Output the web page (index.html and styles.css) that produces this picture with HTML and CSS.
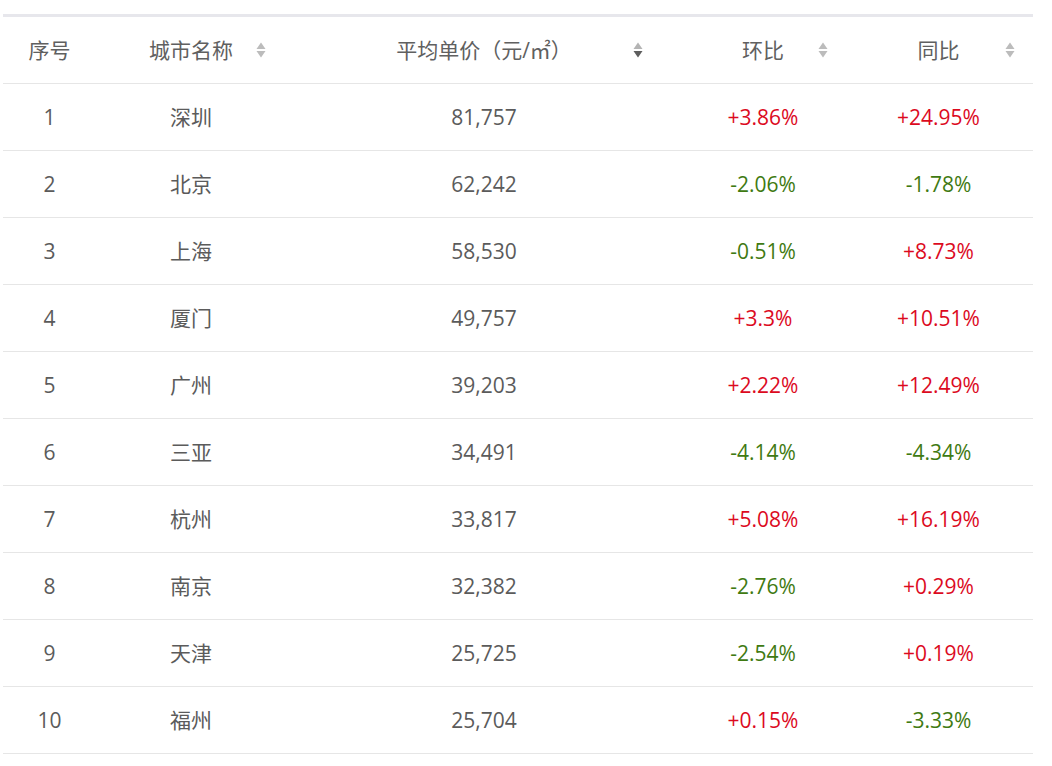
FILE: index.html
```html
<!DOCTYPE html>
<html lang="zh-CN">
<head>
<meta charset="utf-8">
<title>城市房价排行</title>
<link rel="stylesheet" href="styles.css">
</head>
<body>
<div class="table">
  <div class="row head">
    <div class="cell">序号</div>
    <div class="cell sortable">城市名称<svg class="sort" viewBox="0 0 10 16" width="10" height="16"><polygon class="up" points="0.5,7 5,0.5 9.5,7"/><polygon class="down" points="0.5,9 9.5,9 5,15.5"/></svg></div>
    <div class="cell sortable wide">平均单价（元/㎡）<svg class="sort active-desc" viewBox="0 0 10 16" width="10" height="16"><polygon class="up" points="0.5,7 5,0.5 9.5,7"/><polygon class="down" points="0.5,9 9.5,9 5,15.5"/></svg></div>
    <div class="cell sortable">环比<svg class="sort" viewBox="0 0 10 16" width="10" height="16"><polygon class="up" points="0.5,7 5,0.5 9.5,7"/><polygon class="down" points="0.5,9 9.5,9 5,15.5"/></svg></div>
    <div class="cell sortable">同比<svg class="sort" viewBox="0 0 10 16" width="10" height="16"><polygon class="up" points="0.5,7 5,0.5 9.5,7"/><polygon class="down" points="0.5,9 9.5,9 5,15.5"/></svg></div>
  </div>
  <div class="row"><div class="cell">1</div><div class="cell">深圳</div><div class="cell">81,757</div><div class="cell up-c">+3.86%</div><div class="cell up-c">+24.95%</div></div>
  <div class="row"><div class="cell">2</div><div class="cell">北京</div><div class="cell">62,242</div><div class="cell down-c">-2.06%</div><div class="cell down-c">-1.78%</div></div>
  <div class="row"><div class="cell">3</div><div class="cell">上海</div><div class="cell">58,530</div><div class="cell down-c">-0.51%</div><div class="cell up-c">+8.73%</div></div>
  <div class="row"><div class="cell">4</div><div class="cell">厦门</div><div class="cell">49,757</div><div class="cell up-c">+3.3%</div><div class="cell up-c">+10.51%</div></div>
  <div class="row"><div class="cell">5</div><div class="cell">广州</div><div class="cell">39,203</div><div class="cell up-c">+2.22%</div><div class="cell up-c">+12.49%</div></div>
  <div class="row"><div class="cell">6</div><div class="cell">三亚</div><div class="cell">34,491</div><div class="cell down-c">-4.14%</div><div class="cell down-c">-4.34%</div></div>
  <div class="row"><div class="cell">7</div><div class="cell">杭州</div><div class="cell">33,817</div><div class="cell up-c">+5.08%</div><div class="cell up-c">+16.19%</div></div>
  <div class="row"><div class="cell">8</div><div class="cell">南京</div><div class="cell">32,382</div><div class="cell down-c">-2.76%</div><div class="cell up-c">+0.29%</div></div>
  <div class="row"><div class="cell">9</div><div class="cell">天津</div><div class="cell">25,725</div><div class="cell down-c">-2.54%</div><div class="cell up-c">+0.19%</div></div>
  <div class="row"><div class="cell">10</div><div class="cell">福州</div><div class="cell">25,704</div><div class="cell up-c">+0.15%</div><div class="cell down-c">-3.33%</div></div>
</div>
</body>
</html>
```
FILE: styles.css
```css
html, body {
  margin: 0;
  padding: 0;
  background: #ffffff;
}
body {
  padding: 14px 0 0 3px;
  font-family: "Open Sans", "Noto Sans CJK SC", sans-serif;
  font-size: 21px;
  color: #5b5b5b;
}
.table {
  width: 1030px;
  border-top: 3px solid #e7e7ec;
}
.row {
  display: grid;
  grid-template-columns: 93px 190px 396px 162px 189px;
  height: 66px;
  border-bottom: 1px solid #e6e6e6;
}
.cell {
  position: relative;
  display: flex;
  align-items: center;
  justify-content: center;
  line-height: 1;
  white-space: nowrap;
}
.head .cell {
  color: #606060;
}
.sort {
  position: absolute;
  right: 20px;
  top: 50%;
  margin-top: -8px;
}
.cell:nth-child(4) .sort { right: 16px; }
.cell:nth-child(5) .sort { right: 18px; }
.wide .sort { right: 39px; }
.sort polygon { fill: #bcbcbc; }
.sort.active-desc .up { fill: #b4b4b4; }
.sort.active-desc .down { fill: #5e5e5e; }
.up-c { color: #dc0a1e; }
.down-c { color: #3f7a12; }
```
